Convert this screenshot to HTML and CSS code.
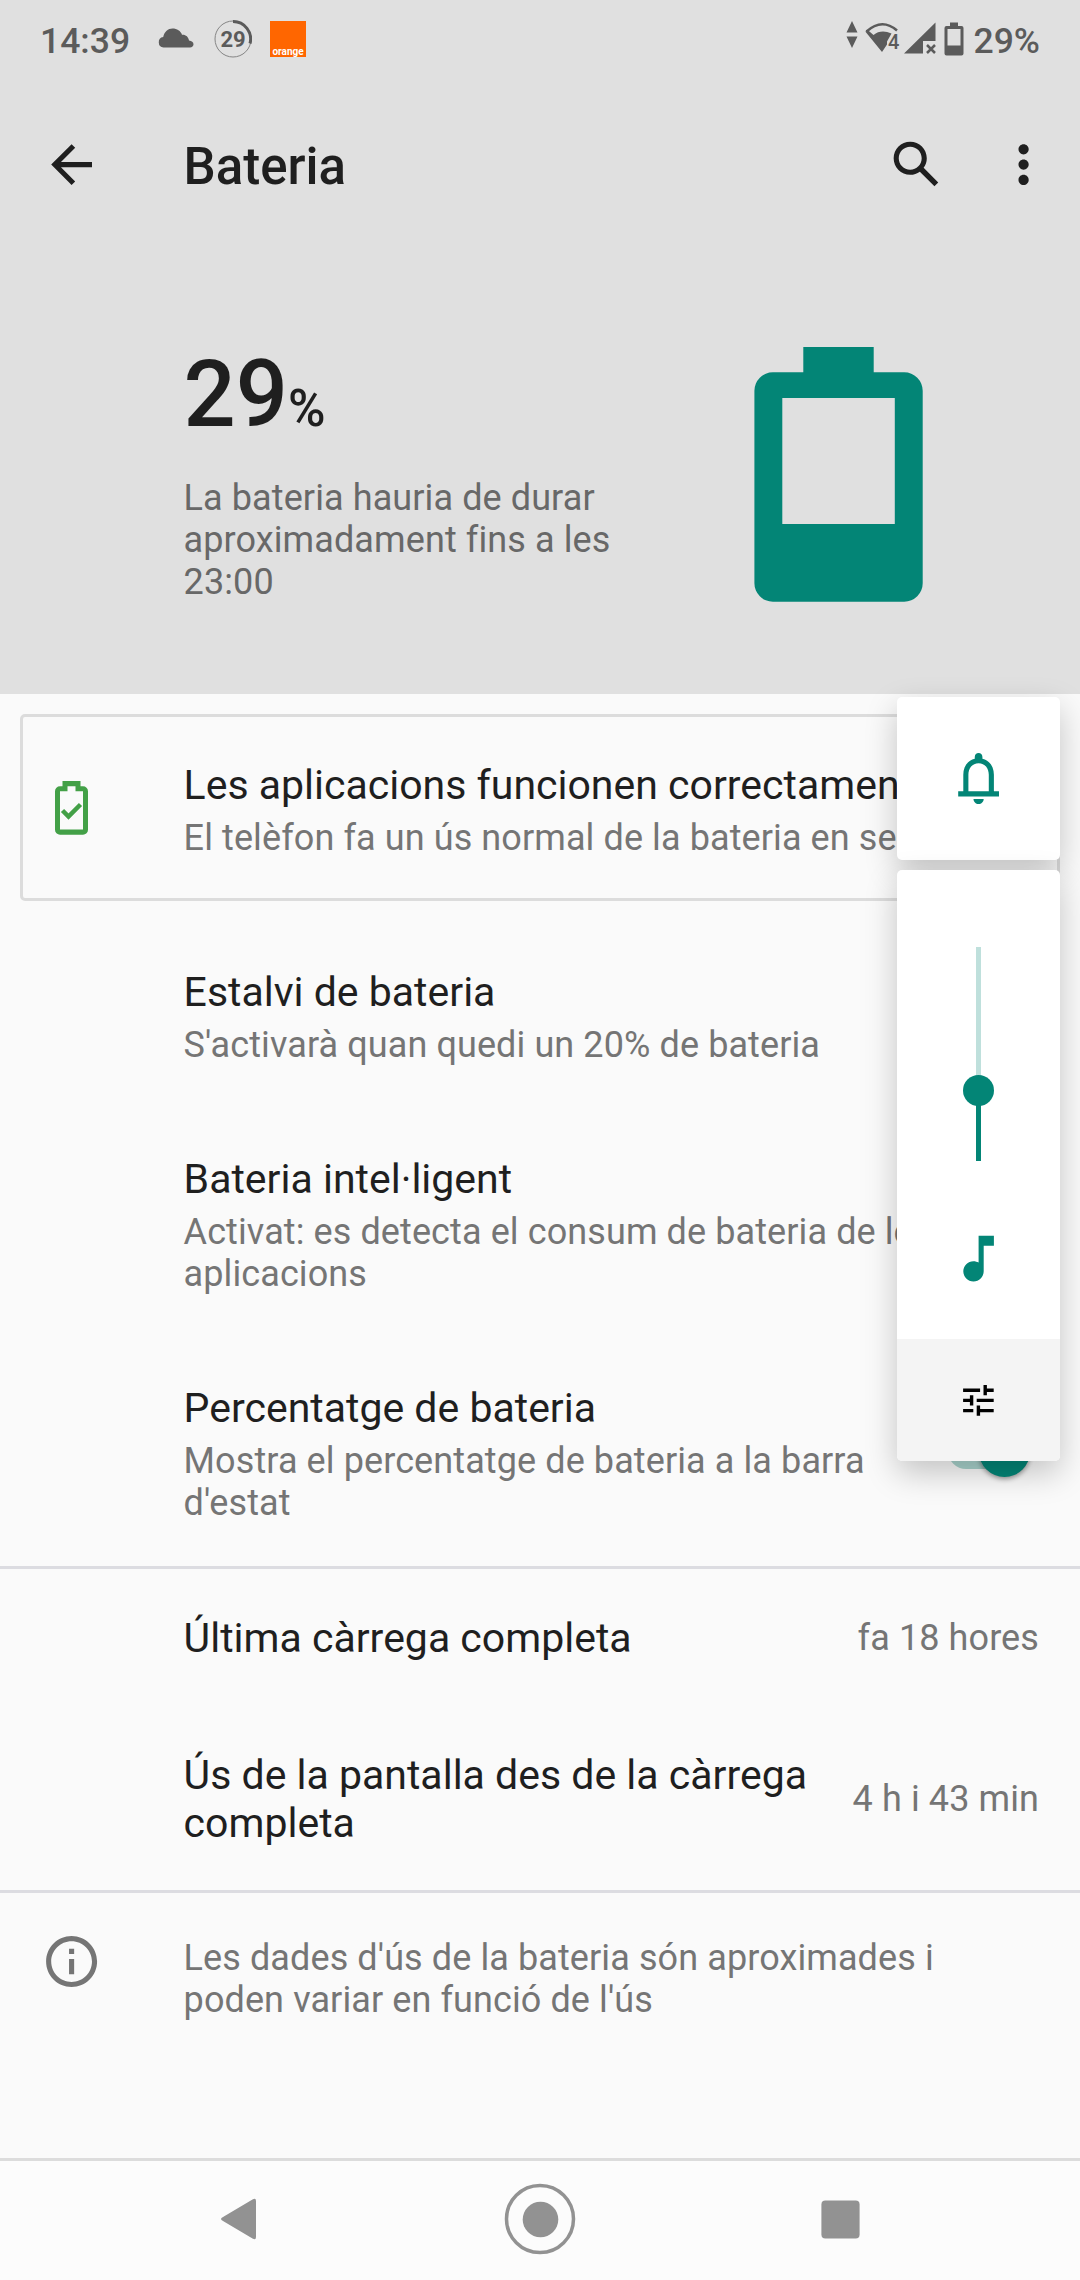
FILE: index.html
```
<!DOCTYPE html>
<html lang="ca">
<head>
  <meta charset="utf-8">
  <title>Bateria</title>
  <meta name="viewport" content="width=device-width, initial-scale=1">
  <link rel="stylesheet" href="styles.css">
</head>
<body>
<header class="header">
  <div class="statusbar">
    <span class="clock">14:39</span>
    <svg class="cloud" width="36" height="20" viewBox="0 0 36 20"><path d="M5.500 19.500a5.300 5.300 0 0 1-.3-10.500C6.500 3.500 10 .5 14.500.5c4.500 0 8.200 2.500 9.500 6.200 3.500-.4 6.500 2 7 5.800 2.700.3 4.500 1.700 4.500 3.700 0 1.900-1.500 3.300-3.500 3.300z"/></svg>
    <div class="gauge">
      <svg width="38" height="38" viewBox="0 0 38 38">
        <circle cx="19" cy="19" r="18" fill="none" stroke="#858585" stroke-width="1"/>
        <path d="M19 1.500a17.500 17.500 0 0 1 17 22" fill="none" stroke="#5b5b5b" stroke-width="3"/>
      </svg>
      <span class="gauge-num">29</span>
    </div>
    <div class="orange">orange</div>
    <div class="status-right">
      <svg class="updown" width="12" height="28" viewBox="0 0 12 28"><path d="M6 0l5.500 11.500H.5zM6 27L.5 15.500h11z"/></svg>
      <svg class="wifi" width="36" height="32" viewBox="0 0 36 32">
        <path d="M2.500 9.500Q18-4.500 33 8.500" fill="none" stroke="#5b5b5b" stroke-width="2.500"/>
        <path d="M1.300 9.500l3-1L9.500 13Q17 7 27.500 11.500l-4.500 8v3L18 30z"/>
        <text x="24" y="27">4</text>
      </svg>
      <svg class="signal" width="32" height="32" viewBox="0 0 32 32">
        <path d="M31.500.5V19H19v12.500H0z"/>
        <path d="M23 23l8 8M31 23l-8 8" stroke="#5b5b5b" stroke-width="2.500"/>
      </svg>
      <svg class="mini-battery" width="20" height="34" viewBox="0 0 20 34"><path fill-rule="evenodd" d="M6 .5h8V4h3.500a2 2 0 0 1 2 2v25.500a2 2 0 0 1-2 2h-15a2 2 0 0 1-2-2V6a2 2 0 0 1 2-2H6zM3.500 7v16.500h13V7z"/></svg>
      <span class="percent">29%</span>
    </div>
  </div>

  <div class="toolbar">
    <svg class="icon" viewBox="0 0 24 24"><path d="M20 11H7.830l5.590-5.590L12 4l-8 8 8 8 1.410-1.410L7.830 13H20v-2z"/></svg>
    <h1>Bateria</h1>
    <svg class="icon search" viewBox="0 0 24 24"><path d="M20.490 19l-5.730-5.730C15.530 12.200 16 10.910 16 9.500 16 5.910 13.090 3 9.500 3S3 5.910 3 9.500 5.910 16 9.500 16c1.410 0 2.700-.47 3.770-1.240L19 20.490 20.490 19zM5 9.500C5 7.010 7.010 5 9.500 5S14 7.010 14 9.500 11.990 14 9.500 14 5 11.990 5 9.500z"/></svg>
    <svg class="icon" viewBox="0 0 24 24"><path d="M12 8c1.100 0 2-.9 2-2s-.9-2-2-2-2 .9-2 2 .9 2 2 2zm0 2c-1.100 0-2 .9-2 2s.9 2 2 2 2-.9 2-2-.9-2-2-2zm0 6c-1.100 0-2 .9-2 2s.9 2 2 2 2-.9 2-2-.9-2-2-2z"/></svg>
  </div>

  <div class="summary">
    <div class="summary-text">
      <div class="level">29<span>%</span></div>
      <p>La bateria hauria de durar aproximadament fins a les 23:00</p>
    </div>
    <svg class="big-battery" width="170" height="256" viewBox="0 0 170 256"><path fill-rule="evenodd" d="M49.300 0h70.400v25.300h30.500a18.500 18.500 0 0 1 18.500 18.500v192.400a18.500 18.500 0 0 1-18.500 18.500H18.900A18.500 18.500 0 0 1 .4 236.200V43.800a18.500 18.500 0 0 1 18.500-18.500h30.400zM28.300 51v126h112.500V51z"/></svg>
  </div>
</header>

<main>
  <section class="tip">
    <svg width="33" height="54" viewBox="0 0 33 54">
      <path fill-rule="evenodd" d="M7.500 0h18v5.300H28a5 5 0 0 1 5 5v38.500a5 5 0 0 1-5 5H5a5 5 0 0 1-5-5V10.300a5 5 0 0 1 5-5h2.500zM12.500 5.300v5H5v38.300h23V10.300h-7.500v-5z"/>
      <path d="M7.500 29.500l6 6 12-12" fill="none" stroke="#43a047" stroke-width="4.500"/>
    </svg>
    <div>
      <h2>Les aplicacions funcionen correctament</h2>
      <p>El telèfon fa un ús normal de la bateria en segon pla</p>
    </div>
  </section>

  <section class="row saver">
    <h2>Estalvi de bateria</h2>
    <p>S'activarà quan quedi un 20% de bateria</p>
  </section>
  <section class="row smart">
    <h2>Bateria intel·ligent</h2>
    <p>Activat: es detecta el consum de bateria de les aplicacions</p>
  </section>
  <section class="row percentage">
    <div>
      <h2>Percentatge de bateria</h2>
      <p>Mostra el percentatge de bateria a la barra d'estat</p>
    </div>
    <div class="switch"><span></span></div>
  </section>

  <section class="row value last-charge">
    <h2>Última càrrega completa</h2>
    <span>fa 18 hores</span>
  </section>
  <section class="row value screen-use">
    <h2>Ús de la pantalla des de la càrrega completa</h2>
    <span>4 h i 43 min</span>
  </section>

  <footer class="note">
    <svg class="icon" viewBox="0 0 24 24"><path d="M11 7h2v2h-2zm0 4h2v6h-2zm1-9C6.480 2 2 6.480 2 12s4.480 10 10 10 10-4.480 10-10S17.520 2 12 2zm0 18c-4.410 0-8-3.590-8-8s3.590-8 8-8 8 3.590 8 8-3.590 8-8 8z"/></svg>
    <p>Les dades d'ús de la bateria són aproximades i poden variar en funció de l'ús</p>
  </footer>
</main>

<nav class="navbar">
  <svg width="38" height="44" viewBox="0 0 38 44"><path d="M3 20L32.500 2.500Q36 .5 36 4v36q0 3.500-3.500 1.500L3 24q-4-2 0-4z"/></svg>
  <svg width="72" height="72" viewBox="0 0 72 72"><circle cx="36" cy="36" r="33.500" fill="none" stroke="#929292" stroke-width="3.500"/><circle cx="36.500" cy="36.500" r="17.800"/></svg>
  <svg width="39" height="39" viewBox="0 0 39 39"><rect x=".4" y=".4" width="38.200" height="38.200" rx="4"/></svg>
</nav>

<!-- volume panel, floats over the list -->
<aside class="volume">
  <div class="ringer">
    <svg class="icon" viewBox="0 0 24 24"><path d="M18 17v-6.500c0-3.070-1.640-5.640-4.500-6.320V3.500C13.500 2.670 12.830 2 12 2s-1.500.67-1.500 1.500v.68C7.630 4.860 6 7.420 6 10.500V17H4v2h16v-2zm-2 0H8v-6.500C8 8 9.500 6 12 6s4 2 4 4.500zm-6 3c0 1.100.9 2 2 2s2-.9 2-2z"/></svg>
  </div>
  <div class="stream">
    <div class="slider"><span></span></div>
    <svg class="icon" viewBox="0 0 24 24"><path d="M12 3v10.550c-.59-.34-1.270-.55-2-.55-2.210 0-4 1.790-4 4s1.790 4 4 4 4-1.790 4-4V7h4V3h-6z"/></svg>
    <div class="tune">
      <svg viewBox="0 0 24 24"><path d="M3 17v2h6v-2H3zM3 5v2h10V5H3zm10 16v-2h8v-2h-8v-2h-2v6h2zM7 9v2H3v2h4v2h2V9H7zm14 4v-2H11v2h10zm-6-4h2V7h4V5h-4V3h-2v6z"/></svg>
    </div>
  </div>
</aside>
</body>
</html>
```

FILE: styles.css
```
* {
    box-sizing: border-box;
}

body {
    margin: 0;
    width: 1080px;
    height: 2280px;
    overflow: hidden;
    position: relative;
    display: flex;
    flex-direction: column;
    background: #fafafa;
    color: #1f1f1f;
    font-family: Roboto, "Noto Sans", sans-serif;
    font-size: 36px;
    line-height: 42px;
}

h1, h2, p {
    margin: 0;
    font-weight: 400;
}

svg {
    display: block;
    flex: none;
}

.icon {
    width: 61.2px;
    height: 61.2px;
}

.header {
    height: 694px;
    background: #e0e0e0;
}

/* status bar */
.statusbar {
    height: 78px;
    display: flex;
    align-items: center;
    padding: 0 40px 0 40px;
    color: #5b5b5b;
    fill: #5b5b5b;
    font-size: 35.5px;
    font-weight: 500;
}

.clock {
    width: 91px;
    padding-top: 3px;
}

.cloud {
    margin: -3px 0 0 27px;
}

.gauge {
    position: relative;
    width: 38px;
    height: 38px;
    margin: -1px 0 0 20px;
}

.gauge-num {
    position: absolute;
    inset: 0;
    font-size: 22px;
    line-height: 39px;
    text-align: center;
    font-weight: 700;
}

.orange {
    width: 36px;
    height: 36px;
    margin: -1px 0 0 18px;
    padding-top: 25px;
    background: #ff6600;
    color: #fff;
    font-size: 10px;
    line-height: 11px;
    font-weight: 700;
    text-align: center;
    overflow: hidden;
}

.status-right {
    margin-left: auto;
    display: flex;
    align-items: center;
}

.updown {
    margin: -8px 6px 0 0;
}

.wifi {
    margin: -2px 4px 0 0;
}

.wifi text {
    font-size: 20px;
    stroke: #e0e0e0;
    stroke-width: 2px;
    paint-order: stroke;
}

.signal {
    margin-top: -2px;
}

.mini-battery {
    margin: -1px 10px 0 8px;
}

.percent {
    padding-top: 3px;
}

/* toolbar */
.toolbar {
    height: 172px;
    display: flex;
    align-items: center;
    padding: 1px 26px 0 41px;
    fill: #1f1f1f;
}

.toolbar h1 {
    flex: 1;
    margin-left: 81.4px;
    padding-top: 5px;
    font-size: 51px;
    line-height: 60px;
    font-weight: 500;
}

.search {
    margin-right: 46px;
}

/* battery level */
.summary {
    display: flex;
    padding-left: 183.6px;
}

.summary-text {
    width: 480px;
    padding-top: 91px;
}

.level {
    font-size: 91.8px;
    line-height: 108px;
    font-weight: 500;
}

.level span {
    font-size: 51px;
}

.summary p {
    margin-top: 14px;
    color: #686868;
}

p,
.value span {
    letter-spacing: .1px;
}

.big-battery {
    margin: 97px 0 0 90px;
    fill: #038576;
}

/* list */
main {
    flex: 1;
}

h2 {
    font-size: 41px;
    line-height: 48px;
}

main p,
.value span {
    color: #757575;
}

.tip {
    height: 187px;
    margin: 20px 20px 0;
    padding-left: 32px;
    border: 3px solid #dcdcdc;
    border-radius: 5px;
    display: flex;
    align-items: center;
    fill: #43a047;
    white-space: nowrap;
    overflow: hidden;
}

.tip div {
    margin: 5px 0 0 95.6px;
}

.tip p,
.row p {
    margin-top: 8px;
}

.row {
    padding: 0 41px 0 183.6px;
}

.saver {
    margin-top: 67px;
}

.smart,
.percentage {
    margin-top: 89px;
}

.row.percentage {
    height: 185px;
    padding-right: 50px;
    display: flex;
    justify-content: space-between;
    border-bottom: 3px solid #dcdce1;
}

.switch {
    width: 82px;
    height: 36px;
    margin-top: 49px;
    border-radius: 18px;
    background: #a9d3cd;
    position: relative;
    flex: none;
}

.switch span {
    position: absolute;
    top: -7px;
    right: 0;
    width: 51px;
    height: 51px;
    border-radius: 50%;
    background: #038576;
    box-shadow: 0 2px 5px rgba(0, 0, 0, .4);
}

.value {
    display: flex;
    align-items: center;
    justify-content: space-between;
}

.value span {
    white-space: nowrap;
}

.last-charge {
    height: 137px;
}

.screen-use {
    height: 187px;
    padding-top: 2px;
    border-bottom: 3px solid #dcdce1;
}

.screen-use h2 {
    width: 640px;
}

.note {
    display: flex;
    padding: 38px 80px 0 41px;
    fill: #757575;
}

.note p {
    margin-left: 81.4px;
    padding-top: 6px;
}

/* navigation bar */
.navbar {
    height: 122px;
    border-top: 3px solid #dcdcdc;
    background: #fcfcfc;
    display: flex;
    align-items: center;
    justify-content: space-between;
    padding: 0 220px 3px;
    fill: #929292;
}

/* volume panel */
.volume {
    position: absolute;
    top: 697px;
    left: 897px;
    width: 163px;
    fill: #038576;
}

.ringer,
.stream {
    border-radius: 5px;
    background: #fff;
    box-shadow: 0 12px 32px rgba(0, 0, 0, .22);
}

.ringer {
    height: 163px;
    display: flex;
    align-items: center;
    justify-content: center;
}

.stream {
    height: 594px;
    margin-top: 10px;
    padding-top: 77px;
    display: flex;
    flex-direction: column;
    align-items: center;
    overflow: hidden;
    height: 591px;
}

.slider {
    width: 5px;
    height: 214px;
    margin-bottom: 67px;
    background: linear-gradient(#bfe0dc 143px, #038576 143px);
    position: relative;
}

.slider span {
    position: absolute;
    top: 128px;
    left: -13px;
    width: 31px;
    height: 31px;
    border-radius: 50%;
    background: #038576;
}

.tune {
    width: 100%;
    height: 122px;
    margin-top: auto;
    display: flex;
    align-items: center;
    justify-content: center;
    background: #f4f4f4;
    fill: #000;
}

.tune svg {
    width: 40.8px;
    height: 40.8px;
}
```
